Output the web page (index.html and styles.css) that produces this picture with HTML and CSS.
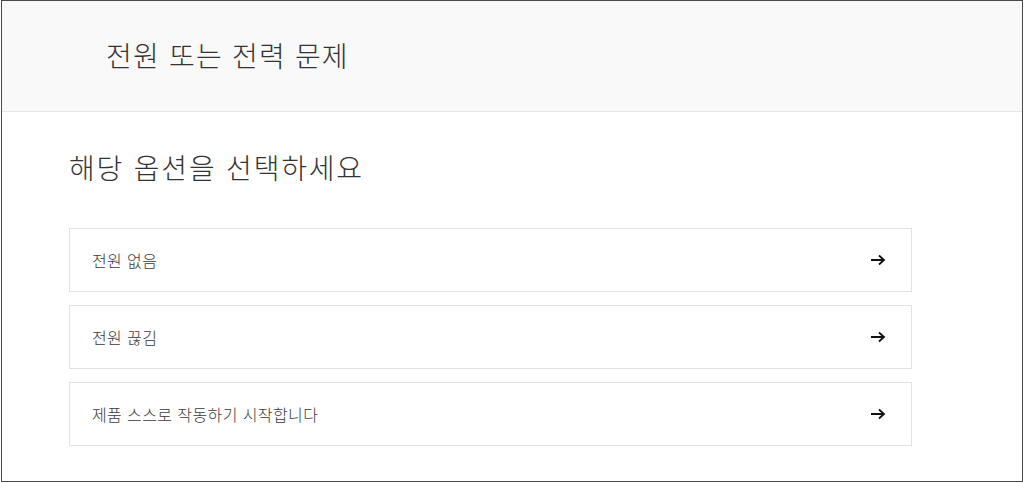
FILE: index.html
```html
<!DOCTYPE html>
<html lang="ko">
<head>
<meta charset="utf-8">
<link rel="stylesheet" href="styles.css">
</head>
<body>
<div class="frame">
  <header class="top">
    <h1 class="top-title">전원 또는 전력 문제</h1>
  </header>
  <main class="content">
    <h2 class="question">해당 옵션을 선택하세요</h2>
    <ul class="options">
      <li class="option"><span class="label">전원 없음</span><svg class="arrow" width="16" height="12" viewBox="0 0 16 12"><path d="M1 6H14M9 1.5L14 6L9 10.5" fill="none" stroke="#111" stroke-width="1.8"/></svg></li>
      <li class="option"><span class="label">전원 끊김</span><svg class="arrow" width="16" height="12" viewBox="0 0 16 12"><path d="M1 6H14M9 1.5L14 6L9 10.5" fill="none" stroke="#111" stroke-width="1.8"/></svg></li>
      <li class="option"><span class="label">제품 스스로 작동하기 시작합니다</span><svg class="arrow" width="16" height="12" viewBox="0 0 16 12"><path d="M1 6H14M9 1.5L14 6L9 10.5" fill="none" stroke="#111" stroke-width="1.8"/></svg></li>
    </ul>
  </main>
</div>
</body>
</html>
```

FILE: styles.css
```css
html, body {
  margin: 0;
  padding: 0;
  background: #ffffff;
}
body {
  font-family: "Noto Sans CJK KR", "Noto Sans", sans-serif;
  color: #333333;
}
.frame {
  box-sizing: border-box;
  margin-left: 1px;
  width: 1022px;
  height: 482px;
  border: 1px solid #4a4a4a;
  background: #ffffff;
  overflow: hidden;
}
.top {
  height: 108px;
  background: #f9f9f9;
  border-bottom: 1px solid #e6e6e6;
  display: flex;
  align-items: center;
  padding-left: 104px;
  padding-bottom: 2px;
}
.top-title {
  margin: 0;
  font-size: 28px;
  font-weight: 300;
  line-height: 1;
  letter-spacing: 1.2px;
  color: #333333;
}
.content {
  padding: 39px 0 0 67px;
}
.question {
  margin: 0;
  font-size: 28px;
  font-weight: 300;
  line-height: 32px;
  letter-spacing: 1.8px;
  color: #333333;
}
.options {
  list-style: none;
  margin: 45px 0 0;
  padding: 0;
  display: flex;
  flex-direction: column;
  gap: 13px;
  width: 843px;
}
.option {
  box-sizing: border-box;
  height: 64px;
  border: 1px solid #e2e2e2;
  display: flex;
  align-items: center;
  justify-content: space-between;
  padding: 0 25px 0 22px;
}
.label {
  font-size: 16px;
  font-weight: 300;
  letter-spacing: 0.4px;
  color: #3a3a3a;
}
.arrow {
  display: block;
}
```
